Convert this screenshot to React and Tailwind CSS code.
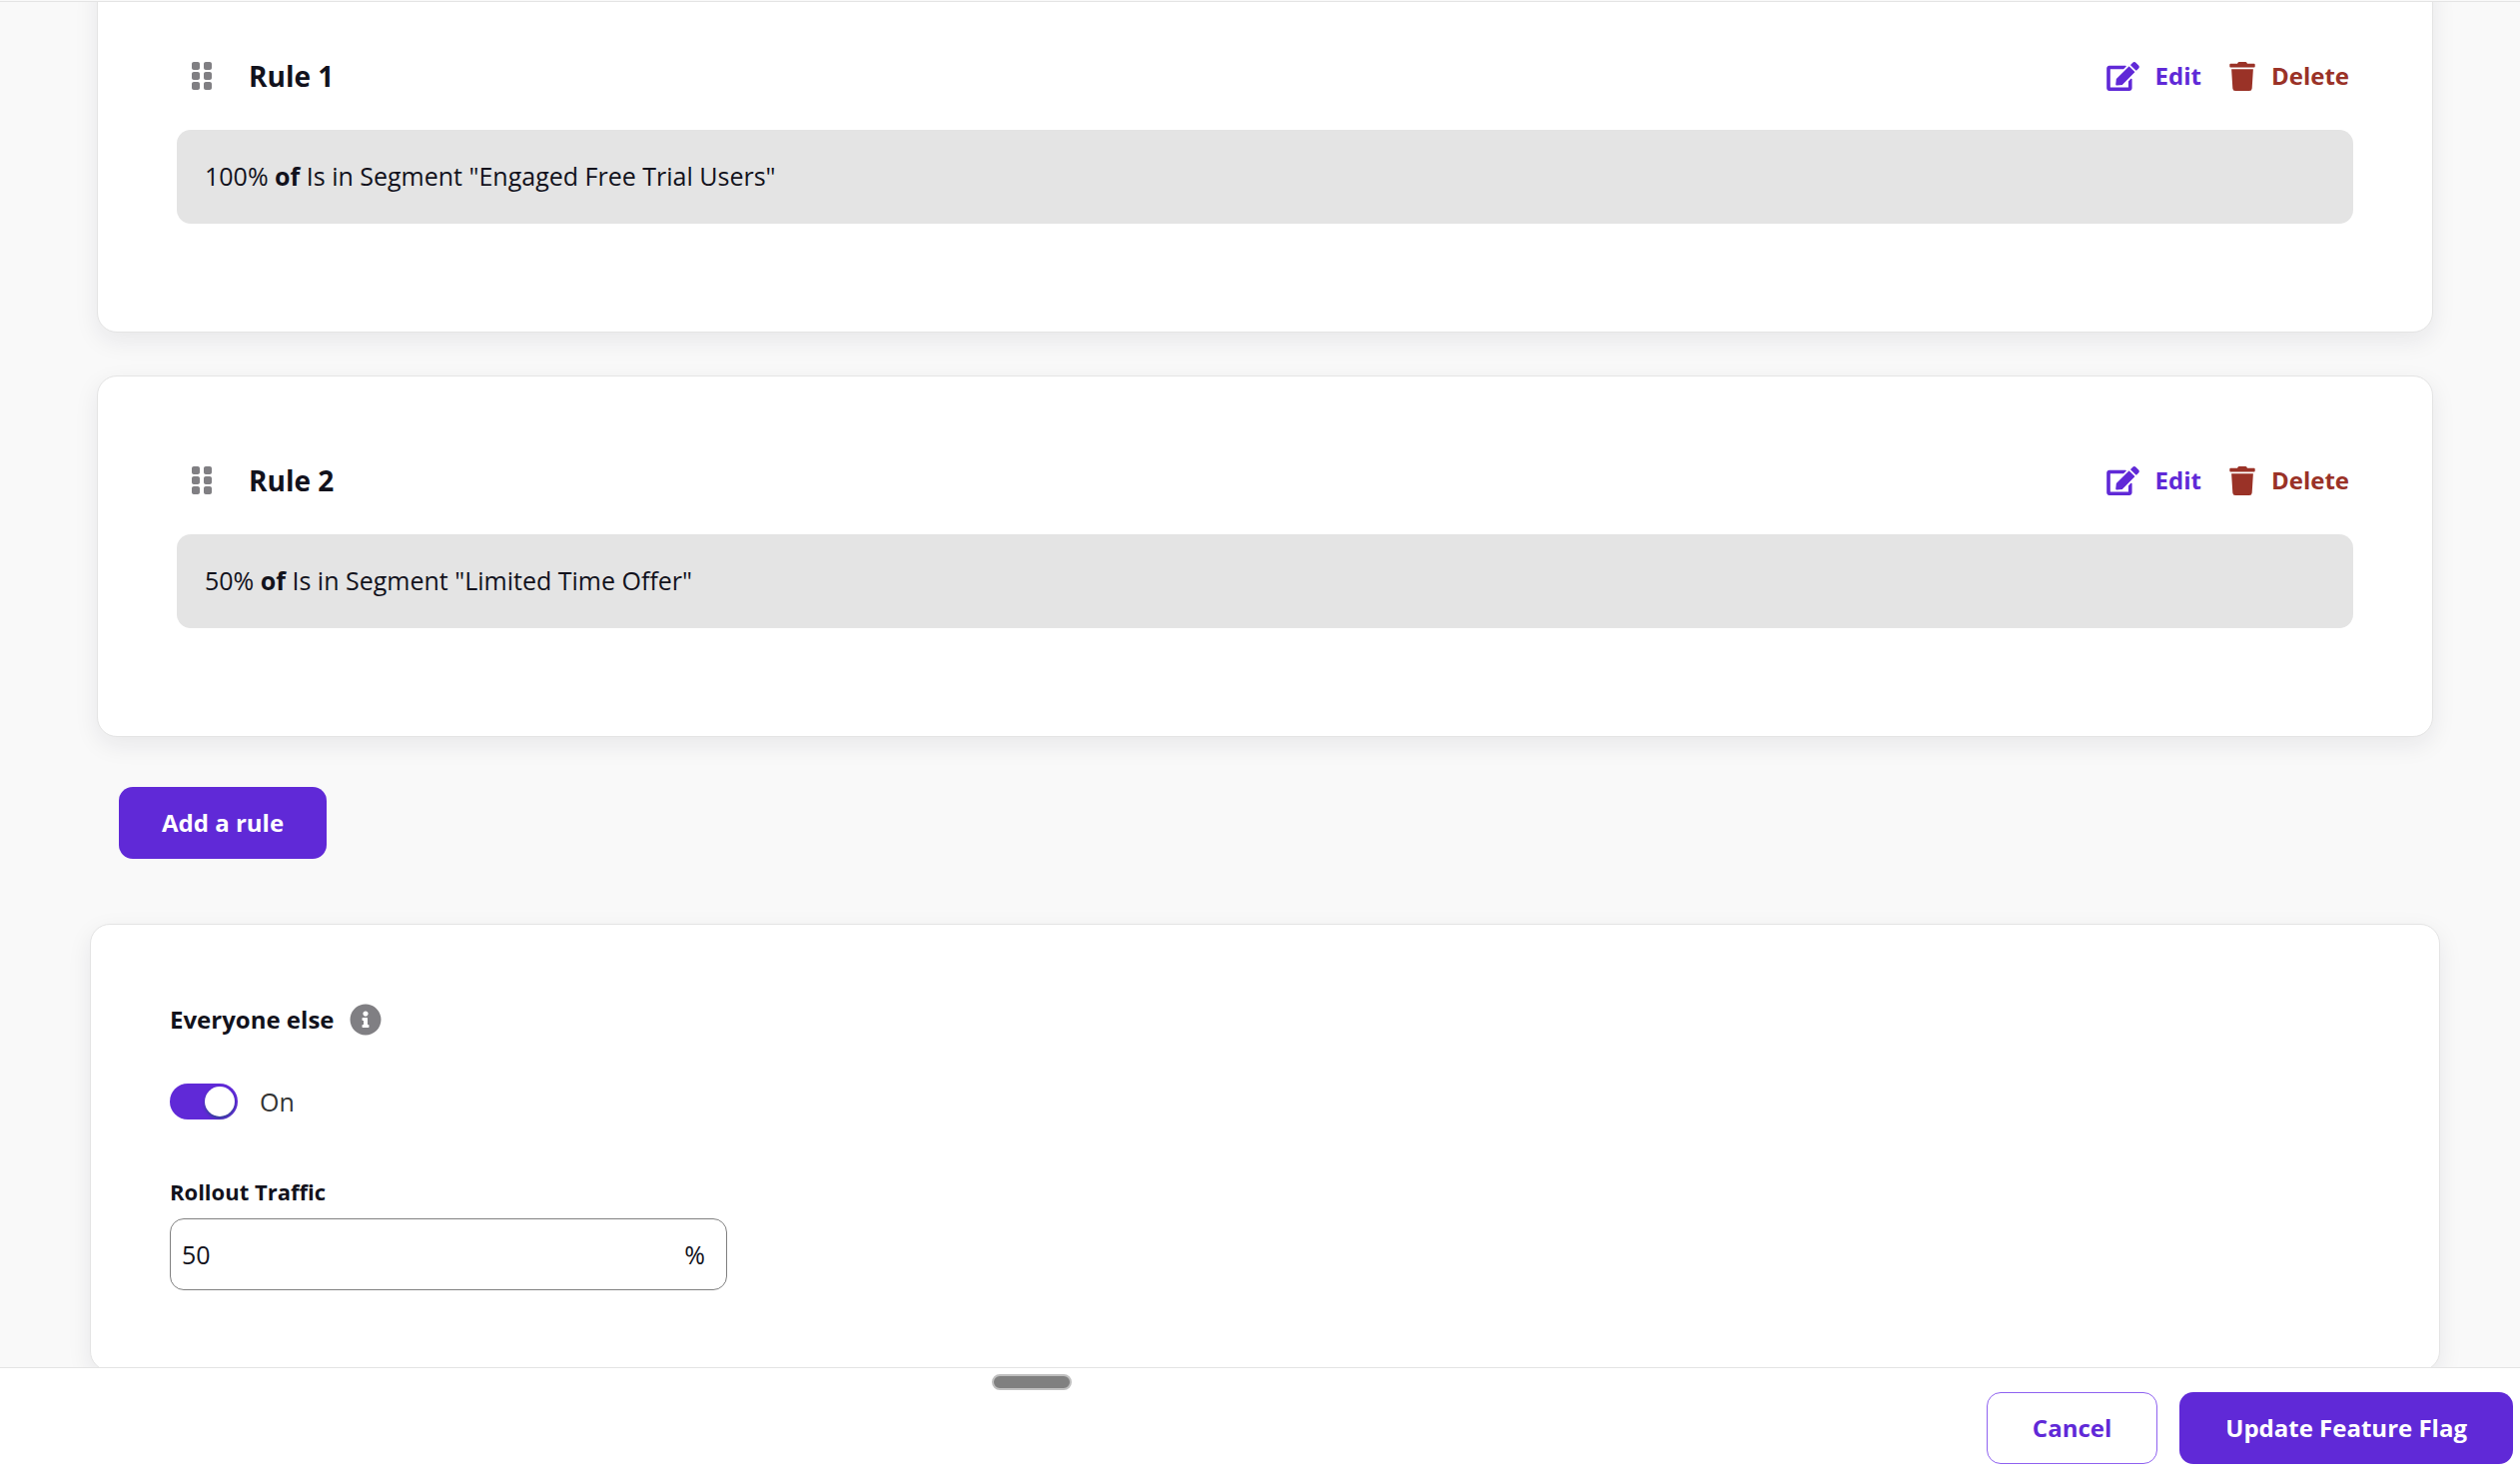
import { useState } from "react";
import { FaEdit, FaGripVertical, FaInfoCircle, FaTrash } from "react-icons/fa";

const RULES = [
  { name: "Rule 1", percent: "100%", condition: 'Is in Segment "Engaged Free Trial Users"' },
  { name: "Rule 2", percent: "50%", condition: 'Is in Segment "Limited Time Offer"' },
];

function Card({ className, children }) {
  return (
    <section
      className={`rounded-[20px] border border-[#e4e4e4] bg-white px-[79px] shadow-[0_8px_24px_rgba(20,24,50,0.08)] ${className}`}
    >
      {children}
    </section>
  );
}

function RuleCard({ rule }) {
  return (
    <Card className="pt-20 pb-[108px]">
      <header className="flex h-12 items-center pr-1 pl-[15px]">
        <button type="button" aria-label={`Reorder ${rule.name}`} className="text-[#807f83]">
          <FaGripVertical className="h-8 w-5" />
        </button>
        <h2 className="ml-[37px] text-[28px] font-bold">{rule.name}</h2>
        <div className="ml-auto flex items-center gap-7 text-2xl font-bold">
          <button type="button" className="flex items-center gap-4 text-[#6029d7]">
            <FaEdit className="h-[29px] w-[33px]" />
            Edit
          </button>
          <button type="button" className="flex items-center gap-4 text-[#9a3227]">
            <FaTrash className="h-[29px] w-[26px]" />
            Delete
          </button>
        </div>
      </header>
      <p className="mt-[30px] flex h-[94px] items-center rounded-[14px] bg-[#e4e4e4] px-7 pb-0.5">
        <span>
          {rule.percent} <strong className="font-bold">of</strong> {rule.condition}
        </span>
      </p>
    </Card>
  );
}

export default function App() {
  const [on, setOn] = useState(true);
  const [traffic, setTraffic] = useState("50");

  return (
    <div className="flex h-screen flex-col bg-[#f9f9f9] font-['Open_Sans',sans-serif] text-[25px] leading-8 text-[#12121c]">
      <main className="mt-px min-h-0 flex-1 overflow-hidden border-t border-[#e4e4e4] pr-20 pl-[90px]">
        <div className="-mt-[31px] flex flex-col gap-[43px] px-[7px]">
          {RULES.map((rule) => (
            <RuleCard key={rule.name} rule={rule} />
          ))}
        </div>
        <button
          type="button"
          className="mt-[50px] ml-[29px] h-[72px] rounded-[14px] bg-[#6029d7] px-[43px] text-2xl font-bold text-white"
        >
          Add a rule
        </button>

        <Card className="mt-[65px] pt-[79px] pb-20">
          <h2 className="flex items-center gap-4 text-2xl font-bold">
            Everyone else
            <FaInfoCircle className="size-8 text-[#807f83]" />
          </h2>
          <label className="mt-12 flex items-center gap-[22px] text-[#333333]">
            <input
              type="checkbox"
              role="switch"
              checked={on}
              onChange={(e) => setOn(e.target.checked)}
              className="flex h-9 w-[68px] appearance-none items-center rounded-full bg-[#807f83] px-[3px] before:size-[30px] before:rounded-full before:bg-white before:shadow-[0_2px_3px_rgba(0,90,80,0.5)] checked:justify-end checked:bg-[#6029d7]"
            />
            {on ? "On" : "Off"}
          </label>
          <div className="mt-14 flex max-w-[558px] flex-col gap-[11px]">
            <label htmlFor="traffic" className="text-[22px] font-bold">
              Rollout Traffic
            </label>
            <div className="flex h-[72px] items-center rounded-[14px] border border-[#808080] pr-[21px] pl-[11px]">
              <input
                id="traffic"
                type="text"
                inputMode="numeric"
                value={traffic}
                onChange={(e) => setTraffic(e.target.value)}
                className="min-w-0 flex-1 outline-none"
              />
              <span>%</span>
            </div>
          </div>
        </Card>
      </main>

      <footer className="relative flex justify-end gap-[22px] border-t border-[#e4e4e4] bg-white pt-6 pr-[7px] pb-[18px] text-2xl font-bold">
        <div className="absolute top-1.5 left-[993px] h-4 w-20 rounded-full border-2 border-[#c0c0c0] bg-[#808080]" />
        <button
          type="button"
          className="h-[72px] rounded-[14px] border border-[#8f62f0] px-[45px] text-[#6029d7]"
        >
          Cancel
        </button>
        <button type="button" className="h-[72px] rounded-[14px] bg-[#6029d7] px-[46px] text-white">
          Update Feature Flag
        </button>
      </footer>
    </div>
  );
}
